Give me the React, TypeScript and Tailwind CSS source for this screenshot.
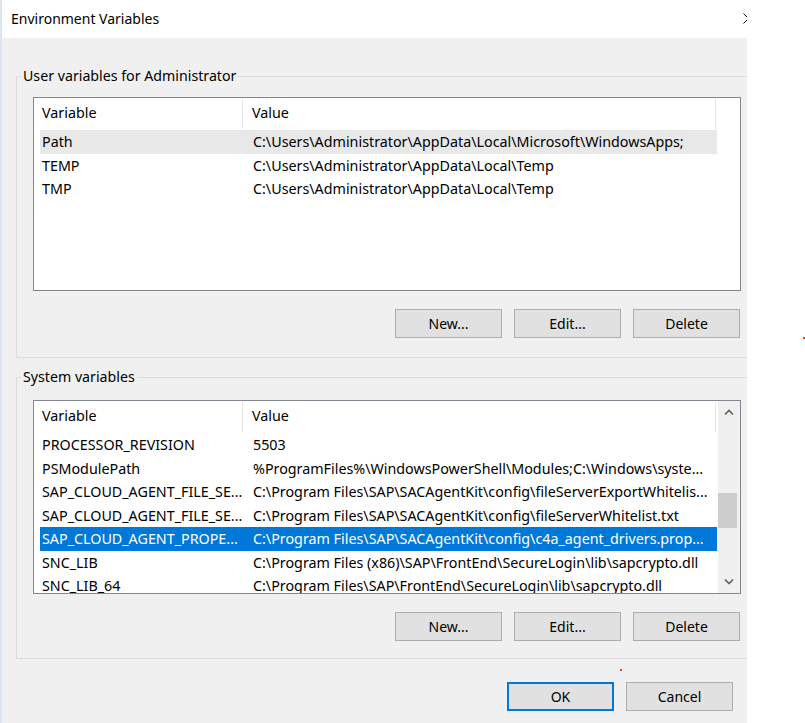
import React from "react";

type Row = [string, string];

const userVars: Row[] = [
  ["Path", "C:\\Users\\Administrator\\AppData\\Local\\Microsoft\\WindowsApps;"],
  ["TEMP", "C:\\Users\\Administrator\\AppData\\Local\\Temp"],
  ["TMP", "C:\\Users\\Administrator\\AppData\\Local\\Temp"],
];

const sysVars: Row[] = [
  ["PROCESSOR_REVISION", "5503"],
  ["PSModulePath", "%ProgramFiles%\\WindowsPowerShell\\Modules;C:\\Windows\\syste..."],
  ["SAP_CLOUD_AGENT_FILE_SE...", "C:\\Program Files\\SAP\\SACAgentKit\\config\\fileServerExportWhitelis..."],
  ["SAP_CLOUD_AGENT_FILE_SE...", "C:\\Program Files\\SAP\\SACAgentKit\\config\\fileServerWhitelist.txt"],
  ["SAP_CLOUD_AGENT_PROPE...", "C:\\Program Files\\SAP\\SACAgentKit\\config\\c4a_agent_drivers.prop..."],
  ["SNC_LIB", "C:\\Program Files (x86)\\SAP\\FrontEnd\\SecureLogin\\lib\\sapcrypto.dll"],
  ["SNC_LIB_64", "C:\\Program Files\\SAP\\FrontEnd\\SecureLogin\\lib\\sapcrypto.dll"],
];

function WinButton({ label, primary }: { label: string; primary?: boolean }) {
  return (
    <div
      className={
        primary
          ? "w-[107px] h-[29px] bg-[#e1e1e1] border-2 border-[#0078d7] flex items-center justify-center text-black"
          : "w-[107px] h-[29px] bg-[#e1e1e1] border border-[#adadad] flex items-center justify-center text-black"
      }
    >
      {label}
    </div>
  );
}

function ListView({
  rows,
  hover,
  selected,
  scrollbar,
}: {
  rows: Row[];
  hover?: number;
  selected?: number;
  scrollbar?: boolean;
}) {
  return (
    <div className="w-[708px] h-[194px] border border-[#828790] bg-white flex overflow-hidden text-[14.3px]">
      <div className="flex-1 flex flex-col overflow-hidden">
        <div className="h-[32px] flex shrink-0">
          <div className="w-[209px] pl-[8px] pb-[2px] flex items-center border-r border-[#e5e5e5] my-[1px]">Variable</div>
          <div className="w-[473px] pl-[9px] pb-[2px] flex items-center border-r border-[#e5e5e5] my-[1px]">Value</div>
        </div>
        {rows.map((r, i) => {
          const isSel = selected === i;
          const isHover = hover === i;
          const cls = isSel
            ? "ml-[6px] w-[677px] h-[23.5px] shrink-0 flex items-center bg-[#0078d7] text-white"
            : isHover
            ? "ml-[6px] w-[677px] h-[23.5px] shrink-0 flex items-center bg-[#e8e8e8]"
            : "ml-[6px] w-[677px] h-[23.5px] shrink-0 flex items-center";
          return (
            <div key={i} className={cls}>
              <div className="w-[203px] pl-[2px] whitespace-nowrap overflow-hidden">{r[0]}</div>
              <div className="flex-1 pl-[10px] whitespace-nowrap overflow-hidden">{r[1]}</div>
            </div>
          );
        })}
      </div>
      {scrollbar && (
        <div className="w-[22px] bg-[#f0f0f0] flex flex-col shrink-0">
          <div className="h-[23px] flex items-center justify-center">
            <svg width="10" height="7" viewBox="0 0 10 7">
              <path d="M1 5.5 L5 1.5 L9 5.5" fill="none" stroke="#606060" strokeWidth="1.6" />
            </svg>
          </div>
          <div className="flex-1 flex flex-col">
            <div className="h-[69px]" />
            <div className="h-[35px] w-[19px] bg-[#cdcdcd]" />
          </div>
          <div className="h-[23px] flex items-center justify-center">
            <svg width="10" height="7" viewBox="0 0 10 7">
              <path d="M1 1.5 L5 5.5 L9 1.5" fill="none" stroke="#606060" strokeWidth="1.6" />
            </svg>
          </div>
        </div>
      )}
    </div>
  );
}

function ButtonRow() {
  return (
    <div className="w-[708px] flex justify-end gap-[12px] pr-[1px] mt-[18px]">
      <WinButton label="New..." />
      <WinButton label="Edit..." />
      <WinButton label="Delete" />
    </div>
  );
}

export default function App() {
  return (
    <div
      className="relative w-[805px] h-[723px] bg-white flex text-[14px] text-black overflow-hidden"
      style={{ fontFamily: '"Noto Sans", "Liberation Sans", sans-serif' }}
    >
      <div className="w-[2px] h-full bg-[#dce4f0] shrink-0" />
      <div className="w-[745px] h-full flex flex-col overflow-hidden shrink-0">
        <div className="relative h-[38px] bg-white flex items-center pl-[9px] pb-[2px] shrink-0">
          <span>Environment Variables</span>
          <svg className="absolute left-[741px] top-[13px]" width="11" height="11" viewBox="0 0 11 11">
            <path d="M0.5 0.5 L10.5 10.5 M10.5 0.5 L0.5 10.5" stroke="#000" strokeWidth="1" />
          </svg>
        </div>
        <div className="flex-1 bg-[#f0f0f0] pl-[14px] flex flex-col">
          <fieldset className="mt-[28px] w-[760px] border border-[#dcdcdc] pb-[19px] shrink-0">
            <legend className="ml-[4px] px-[2px] leading-[20px] text-[14.2px]">User variables for Administrator</legend>
            <div className="ml-[16px] mt-[11px]">
              <ListView rows={userVars} hover={0} />
              <ButtonRow />
            </div>
          </fieldset>
          <fieldset className="mt-[9px] w-[760px] border border-[#dcdcdc] pb-[17px] shrink-0">
            <legend className="ml-[4px] px-[2px] leading-[20px] text-[14.2px]">System variables</legend>
            <div className="ml-[16px] mt-[13px]">
              <ListView rows={sysVars} selected={4} scrollbar />
              <ButtonRow />
            </div>
          </fieldset>
          <div className="mt-[23px] flex justify-end gap-[12px] pr-[14px]">
            <WinButton label="OK" primary />
            <WinButton label="Cancel" />
          </div>
        </div>
      </div>
      <div className="absolute left-[803px] top-[337px] w-[2px] h-[2px] bg-[#ff3030]" />
      <div className="absolute left-[620px] top-[669px] w-[2px] h-[2px] bg-[#ff3030]" />
    </div>
  );
}
